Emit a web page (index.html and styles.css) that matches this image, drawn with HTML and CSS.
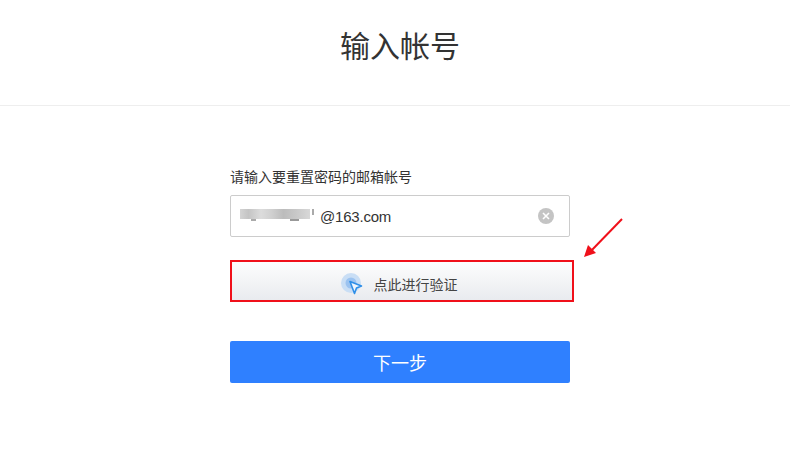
FILE: index.html
```html
<!DOCTYPE html>
<html lang="zh-CN">
<head>
<meta charset="utf-8">
<title>输入帐号</title>
<link rel="stylesheet" href="styles.css">
</head>
<body>
<header class="header"><h1 class="title">输入帐号</h1></header>
<main class="main">
  <form class="form">
    <label class="label">请输入要重置密码的邮箱帐号</label>
    <div class="input">
      <span class="blur"></span>
      <span class="value">@163.com</span>
      <svg class="clear" viewBox="0 0 16 16" width="16" height="16"><circle cx="8" cy="8" r="8" fill="#c4c4c4"/><path d="M5 5l6 6M11 5l-6 6" stroke="#fff" stroke-width="1.6" fill="none"/></svg>
    </div>
    <div class="verify">
      <svg class="cursor" viewBox="0 0 24 24" width="24" height="24">
        <circle cx="10" cy="10" r="10" fill="#c9def5"/>
        <circle cx="10" cy="10" r="5.5" fill="#9cc3f0"/>
        <path d="M9 8.500l11.500 4.500-5 2-2 5.500z" fill="#eef5fd" stroke="#2f8fe8" stroke-width="1.600" stroke-linejoin="round"/>
      </svg>
      <span class="verify-text">点此进行验证</span>
    </div>
    <button class="next" type="button">下一步</button>
    <svg class="arrow" viewBox="0 0 40 40" width="40" height="40"><path d="M38 1L5 35" stroke="#f0101a" stroke-width="2" fill="none"/><path d="M0 39l4-12 8 8z" fill="#f0101a"/></svg>
  </form>
</main>
</body>
</html>
```
FILE: styles.css
```css
html, body { margin: 0; padding: 0; background: #fff; overflow: hidden; }
body { font-family: "Liberation Sans", "Noto Sans CJK SC", sans-serif; color: #333; height: 472px; }
.header { height: 105px; border-bottom: 1px solid #eee; padding-left: 10px; display: flex; justify-content: center; }
.title { margin: 27px 0 0; font-size: 30px; font-weight: 400; line-height: 40px; color: #333; }
.main { padding-left: 10px; display: flex; justify-content: center; }
.form { position: relative; width: 340px; margin-top: 61px; display: flex; flex-direction: column; }
.label { font-size: 14px; line-height: 20px; height: 20px; margin-bottom: 8px; color: #333; }
.input { box-sizing: border-box; height: 42px; border: 1px solid #ccc; border-radius: 2px; display: flex; align-items: center; padding: 0 15px 0 9px; }
.blur {
  width: 74px; height: 14px; margin-right: 6px;
  background:
    linear-gradient(#aaa, #aaa) 11px 10px / 5px 2px no-repeat,
    linear-gradient(#999, #999) 50px 10px / 9px 2px no-repeat,
    linear-gradient(#aaa, #aaa) 72px 0 / 2px 6px no-repeat,
    linear-gradient(90deg, #d4d4d4 0, #c4c4c4 12%, #dcdcdc 30%, #d0d0d0 45%, #bcbcbc 62%, #c8c8c8 80%, #d8d8d8 100%) 0 0 / 70px 10px no-repeat;
}
.value { font-size: 15px; letter-spacing: -0.2px; color: #333; flex: 1; }
.clear { flex: none; }
.verify { box-sizing: border-box; width: 344px; height: 42px; margin-top: 23px; border: 2px solid #f0101a; background: linear-gradient(#fdfdfd, #e9ebef); display: flex; align-items: center; justify-content: center; padding: 6px 4px 0 0; }
.cursor { margin-right: 9px; margin-top: 2px; }
.verify-text { font-size: 14px; color: #444; margin-right: 2px; }
.next { height: 42px; margin-top: 39px; border: 0; border-radius: 2px; background: #2f80ff; color: #fff; font-family: inherit; font-size: 18px; padding: 0; }
.arrow { position: absolute; left: 354px; top: 51px; }
```
